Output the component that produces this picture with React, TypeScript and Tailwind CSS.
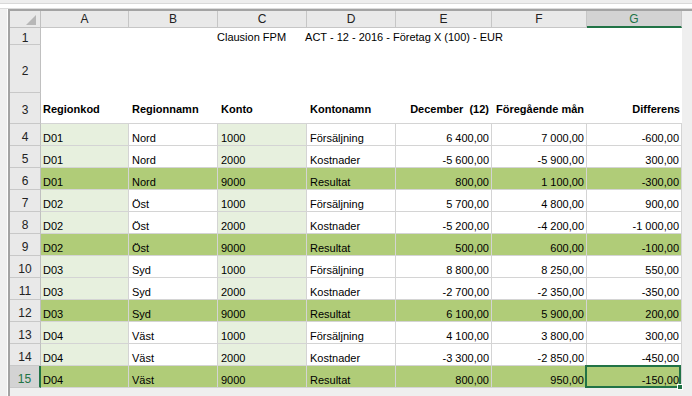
import React from 'react';

type Row = {
  num: number;
  kod: string;
  namn: string;
  konto: string;
  kontonamn: string;
  dec: string;
  prev: string;
  diff: string;
};

const rows: Row[] = [
  { num: 4, kod: 'D01', namn: 'Nord', konto: '1000', kontonamn: 'Försäljning', dec: '6 400,00', prev: '7 000,00', diff: '-600,00' },
  { num: 5, kod: 'D01', namn: 'Nord', konto: '2000', kontonamn: 'Kostnader', dec: '-5 600,00', prev: '-5 900,00', diff: '300,00' },
  { num: 6, kod: 'D01', namn: 'Nord', konto: '9000', kontonamn: 'Resultat', dec: '800,00', prev: '1 100,00', diff: '-300,00' },
  { num: 7, kod: 'D02', namn: 'Öst', konto: '1000', kontonamn: 'Försäljning', dec: '5 700,00', prev: '4 800,00', diff: '900,00' },
  { num: 8, kod: 'D02', namn: 'Öst', konto: '2000', kontonamn: 'Kostnader', dec: '-5 200,00', prev: '-4 200,00', diff: '-1 000,00' },
  { num: 9, kod: 'D02', namn: 'Öst', konto: '9000', kontonamn: 'Resultat', dec: '500,00', prev: '600,00', diff: '-100,00' },
  { num: 10, kod: 'D03', namn: 'Syd', konto: '1000', kontonamn: 'Försäljning', dec: '8 800,00', prev: '8 250,00', diff: '550,00' },
  { num: 11, kod: 'D03', namn: 'Syd', konto: '2000', kontonamn: 'Kostnader', dec: '-2 700,00', prev: '-2 350,00', diff: '-350,00' },
  { num: 12, kod: 'D03', namn: 'Syd', konto: '9000', kontonamn: 'Resultat', dec: '6 100,00', prev: '5 900,00', diff: '200,00' },
  { num: 13, kod: 'D04', namn: 'Väst', konto: '1000', kontonamn: 'Försäljning', dec: '4 100,00', prev: '3 800,00', diff: '300,00' },
  { num: 14, kod: 'D04', namn: 'Väst', konto: '2000', kontonamn: 'Kostnader', dec: '-3 300,00', prev: '-2 850,00', diff: '-450,00' },
  { num: 15, kod: 'D04', namn: 'Väst', konto: '9000', kontonamn: 'Resultat', dec: '800,00', prev: '950,00', diff: '-150,00' },
];

const letters = ['A', 'B', 'C', 'D', 'E', 'F', 'G'];

const cellBase = 'h-[22px] border-r border-b border-[#d4d4d4] text-[11px] leading-[13px] pt-[8px] whitespace-nowrap overflow-hidden';

function RowHead({ n, selected, tall }: { n: number; selected?: boolean; tall?: boolean }) {
  return (
    <div
      className={`flex items-center justify-center border-b border-[#c8c8c8] text-[12px] leading-none ${
        tall ? 'pt-[4px]' : 'pt-[5px]'
      } ${
        selected
          ? 'bg-[#d3d3d3] text-[#217346] border-r-2 border-r-[#217346]'
          : 'bg-[#e9e9e9] text-[#222] border-r border-r-[#c0c0c0]'
      }`}
    >
      {n}
    </div>
  );
}

export default function App() {
  return (
    <div className="w-[692px] h-[396px] overflow-hidden bg-[#f0f0f0] font-['Liberation_Sans',Arial,sans-serif] text-black">
      {/* window chrome above the sheet */}
      <div className="h-[3px] bg-[#eeeeee]" />
      <div className="h-[5px] bg-white border-t border-[#d9d9d9]" />
      <div className="h-px bg-[#dcdcdc]" />

      <div className="flex">
        <div className="w-[7px] shrink-0" />
        <div className="w-px shrink-0 bg-white" />
        <div className="w-[684px] h-[396px] border-l-2 border-t-2 border-[#a3a3a3] bg-[#efefef]">
          <div className="grid grid-cols-[31px_88px_89px_89px_89px_96px_95px_95px] grid-rows-[17px_17px_48px_31px_repeat(12,22px)] w-[672px]">
            {/* corner */}
            <div className="relative bg-[#e9e9e9] border-r border-b border-[#c0c0c0]">
              <svg className="absolute right-[4px] bottom-[2px]" width="10" height="10" viewBox="0 0 10 10">
                <polygon points="10,0 10,10 0,10" fill="#b7b7b7" />
              </svg>
            </div>
            {letters.map((l) =>
              l === 'G' ? (
                <div
                  key={l}
                  className="bg-[#d3d3d3] border-r border-r-[#c6c6c6] border-b-2 border-b-[#217346] text-center text-[12px] leading-[16px] text-[#217346]"
                >
                  {l}
                </div>
              ) : (
                <div
                  key={l}
                  className="bg-[#e9e9e9] border-r border-b border-[#c6c6c6] text-center text-[12px] leading-[16px] text-[#222]"
                >
                  {l}
                </div>
              )
            )}

            {/* row 1 - title */}
            <RowHead n={1} tall />
            <div className="col-span-7 bg-white flex text-[11px] leading-[13px] pt-[3px] whitespace-pre">
              <span className="ml-[176px]">Clausion FPM</span>
              <span className="ml-[19px]">ACT - 12 - 2016 - Företag X (100) - EUR</span>
            </div>

            {/* row 2 - empty */}
            <RowHead n={2} tall />
            <div className="col-span-7 bg-white" />

            {/* row 3 - headings */}
            <RowHead n={3} tall />
            <div className="bg-white border-b border-[#d4d4d4] text-[11px] font-bold leading-[13px] pt-[10px] pl-[2px]">Regionkod</div>
            <div className="bg-white border-b border-[#d4d4d4] text-[11px] font-bold leading-[13px] pt-[10px] pl-[3px]">Regionnamn</div>
            <div className="bg-white border-b border-[#d4d4d4] text-[11px] font-bold leading-[13px] pt-[10px] pl-[3px]">Konto</div>
            <div className="bg-white border-b border-[#d4d4d4] text-[11px] font-bold leading-[13px] pt-[10px] pl-[3px]">Kontonamn</div>
            <div className="bg-white border-b border-[#d4d4d4] text-[11px] font-bold leading-[13px] pt-[10px] pr-[3px] text-right whitespace-pre">December  (12)</div>
            <div className="bg-white border-b border-[#d4d4d4] text-[11px] font-bold leading-[13px] pt-[10px] pl-[4px] whitespace-nowrap overflow-hidden">Föregående mån</div>
            <div className="bg-white border-b border-[#d4d4d4] text-[11px] font-bold leading-[13px] pt-[10px] pr-[2px] text-right">Differens</div>

            {rows.map((r) => {
              const total = r.konto === '9000';
              const selected = r.num === 15;
              const tint = total ? 'bg-[#b0cc78]' : 'bg-[#e7f0de]';
              const plain = total ? 'bg-[#b0cc78]' : 'bg-white';
              return (
                <React.Fragment key={r.num}>
                  <RowHead n={r.num} selected={selected} />
                  <div className={`${cellBase} ${tint} pl-[2px]`}>{r.kod}</div>
                  <div className={`${cellBase} ${plain} pl-[3px]`}>{r.namn}</div>
                  <div className={`${cellBase} ${tint} pl-[3px]`}>{r.konto}</div>
                  <div className={`${cellBase} ${plain} pl-[3px]`}>{r.kontonamn}</div>
                  <div className={`${cellBase} ${plain} pr-[2px] text-right`}>{r.dec}</div>
                  <div className={`${cellBase} ${plain} pr-[2px] text-right`}>{r.prev}</div>
                  <div className={`${cellBase} ${plain} pr-[2px] text-right ${selected ? 'relative overflow-visible' : ''}`}>
                    {r.diff}
                    {selected && (
                      <>
                        <div className="absolute -left-[2px] -top-[1px] right-0 -bottom-[1px] border-2 border-[#217346]" />
                        <div className="absolute -right-[2px] -bottom-[3px] w-[6px] h-[6px] bg-[#217346] border border-white" />
                      </>
                    )}
                  </div>
                </React.Fragment>
              );
            })}
          </div>
        </div>
      </div>
    </div>
  );
}
